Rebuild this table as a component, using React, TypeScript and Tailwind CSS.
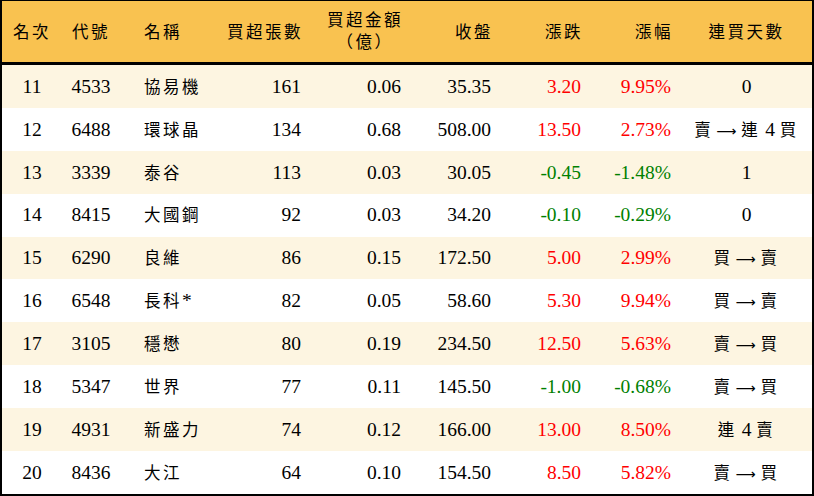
import React from "react";

type Row = {
  rank: number;
  code: string;
  name: string;
  lots: number;
  amount: string;
  close: string;
  change: string;
  pct: string;
  streak: string;
};

const rows: Row[] = [
  { rank: 11, code: "4533", name: "協易機", lots: 161, amount: "0.06", close: "35.35", change: "3.20", pct: "9.95%", streak: "0" },
  { rank: 12, code: "6488", name: "環球晶", lots: 134, amount: "0.68", close: "508.00", change: "13.50", pct: "2.73%", streak: "賣→連 4 買" },
  { rank: 13, code: "3339", name: "泰谷", lots: 113, amount: "0.03", close: "30.05", change: "-0.45", pct: "-1.48%", streak: "1" },
  { rank: 14, code: "8415", name: "大國鋼", lots: 92, amount: "0.03", close: "34.20", change: "-0.10", pct: "-0.29%", streak: "0" },
  { rank: 15, code: "6290", name: "良維", lots: 86, amount: "0.15", close: "172.50", change: "5.00", pct: "2.99%", streak: "買→賣" },
  { rank: 16, code: "6548", name: "長科*", lots: 82, amount: "0.05", close: "58.60", change: "5.30", pct: "9.94%", streak: "買→賣" },
  { rank: 17, code: "3105", name: "穩懋", lots: 80, amount: "0.19", close: "234.50", change: "12.50", pct: "5.63%", streak: "賣→買" },
  { rank: 18, code: "5347", name: "世界", lots: 77, amount: "0.11", close: "145.50", change: "-1.00", pct: "-0.68%", streak: "賣→買" },
  { rank: 19, code: "4931", name: "新盛力", lots: 74, amount: "0.12", close: "166.00", change: "13.00", pct: "8.50%", streak: "連 4 賣" },
  { rank: 20, code: "8436", name: "大江", lots: 64, amount: "0.10", close: "154.50", change: "8.50", pct: "5.82%", streak: "賣→買" },
];

const cols = "grid grid-cols-[60px_58px_95px_96px_100px_90px_90px_90px_1fr]";

// CJK runs get a smaller size and a bit of letter spacing, like the Kai face in the source
function Cjk({ text }: { text: string }) {
  const parts = text.split(/([\u3400-\u9fff\uff08\uff09]+|→)/);
  return (
    <>
      {parts.map((p, i) => {
        if (p === "→")
          return (
            <span
              key={i}
              className="inline-block text-[14px] ml-[3px] mr-[5px]"
              style={{ fontFamily: '"DejaVu Sans", sans-serif' }}
            >
              ⟶
            </span>
          );
        if (/[\u3400-\u9fff\uff08\uff09]/.test(p))
          return (
            <span key={i} className="text-[16.5px] tracking-[2.5px]">
              {p}
            </span>
          );
        return <span key={i}>{p}</span>;
      })}
    </>
  );
}

export default function App() {
  return (
    <div
      className="w-[814px] h-[496px] bg-white text-black text-[19.5px] border-black border-t border-x-2 border-b-2 overflow-hidden"
      style={{ fontFamily: '"Liberation Serif", "Noto Sans CJK TC", serif' }}
    >
      <div className={`${cols} h-[64px] bg-[#f9c250] border-b-[3px] border-black items-center`}>
        <div className="text-center"><Cjk text="名次" /></div>
        <div className="text-center"><Cjk text="代號" /></div>
        <div className="pl-[24px]"><Cjk text="名稱" /></div>
        <div className="text-right pr-[8px]"><Cjk text="買超張數" /></div>
        <div className="flex justify-end pr-[8px]">
          <div className="flex flex-col items-center leading-[22px]">
            <Cjk text="買超金額" />
            <Cjk text="（億）" />
          </div>
        </div>
        <div className="text-right pr-[8px]"><Cjk text="收盤" /></div>
        <div className="text-right pr-[8px]"><Cjk text="漲跌" /></div>
        <div className="text-right pr-[8px]"><Cjk text="漲幅" /></div>
        <div className="text-center"><Cjk text="連買天數" /></div>
      </div>
      {rows.map((r, i) => {
        const up = !r.change.startsWith("-");
        const color = up ? "text-[#ff0000]" : "text-[#008000]";
        return (
          <div
            key={r.rank}
            className={`${cols} h-[42.9px] items-center ${i % 2 === 0 ? "bg-[#fdf5e1]" : "bg-white"}`}
          >
            <div className="text-center">{r.rank}</div>
            <div className="text-center">{r.code}</div>
            <div className="pl-[24px]"><Cjk text={r.name} /></div>
            <div className="text-right pr-[10px]">{r.lots}</div>
            <div className="text-right pr-[10px]">{r.amount}</div>
            <div className="text-right pr-[10px]">{r.close}</div>
            <div className={`text-right pr-[10px] ${color}`}>{r.change}</div>
            <div className={`text-right pr-[10px] ${color}`}>{r.pct}</div>
            <div className="text-center"><Cjk text={r.streak} /></div>
          </div>
        );
      })}
    </div>
  );
}
